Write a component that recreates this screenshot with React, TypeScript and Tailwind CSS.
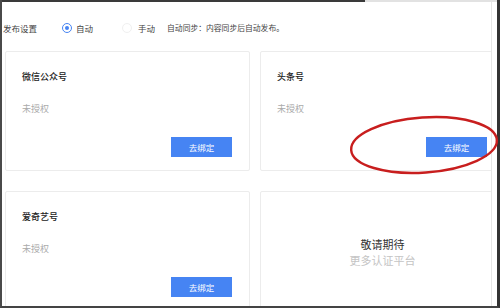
import React from "react";

const font = { fontFamily: '"Noto Sans CJK SC", "Noto Sans", sans-serif' };

function Card({ title }: { title: string }) {
  return (
    <div className="w-[245px] h-[120px] shrink-0 border border-[#ececec] rounded-[2px] bg-white flex flex-col pl-[16px] pr-[17px] pt-[17px] pb-[13px]">
      <div className="text-[9px] leading-[16px] text-[#222] font-medium">{title}</div>
      <div className="text-[9px] leading-[16px] text-[#aaa] mt-[16px]">未授权</div>
      <div className="flex-1" />
      <div className="flex justify-end">
        <div className="w-[61px] h-[20px] bg-[#4684f3] text-white text-[8.5px] flex items-center justify-center">去绑定</div>
      </div>
    </div>
  );
}

export default function App() {
  return (
    <div className="relative w-[500px] h-[308px] bg-white overflow-hidden" style={font}>
      <div className="w-full h-full flex flex-col border-l-2 border-l-[#4a4a4a] border-r-[3px] border-r-[#333] border-b-2 border-b-[#444]">
        <div className="flex h-[2px] shrink-0">
          <div className="w-[363px] bg-[#3a3a3a]" />
          <div className="flex-1 bg-[#e2e2e2]" />
        </div>
        <div className="flex flex-1 min-h-0">
          <div className="flex-1 min-w-0 overflow-hidden flex flex-col">
            <div className="h-[49px] shrink-0 flex items-center pt-[3px] text-[8.5px] text-[#444]">
              <span className="ml-[1px]">发布设置</span>
              <span className="ml-[25px] w-[10px] h-[10px] rounded-full border border-[#4684f3] flex items-center justify-center">
                <span className="w-[4px] h-[4px] rounded-full bg-[#4684f3]" />
              </span>
              <span className="ml-[4px]">自动</span>
              <span className="ml-[29px] w-[10px] h-[10px] rounded-full border border-[#f0f0f0]" />
              <span className="ml-[6px]">手动</span>
              <span className="ml-[12px] text-[7.8px]">自动同步：内容同步后自动发布。</span>
            </div>
            <div className="flex flex-col gap-[20px] pl-[3px]">
              <div className="flex gap-[10px]">
                <Card title="微信公众号" />
                <Card title="头条号" />
              </div>
              <div className="flex gap-[10px]">
                <Card title="爱奇艺号" />
                <div className="w-[245px] h-[120px] shrink-0 border border-[#ececec] rounded-[2px] bg-white flex flex-col items-center justify-center pt-[2px]">
                  <div className="text-[11px] leading-[16px] text-[#333]">敬请期待</div>
                  <div className="text-[11px] leading-[16px] text-[#c4c4c4]">更多认证平台</div>
                </div>
              </div>
            </div>
          </div>
          <div className="w-[6px] shrink-0 border-l border-[#e6e6e6]" />
        </div>
      </div>
      <svg className="absolute left-0 top-0 pointer-events-none" width="500" height="308" viewBox="0 0 500 308">
        <ellipse cx="424" cy="145" rx="73" ry="27.5" transform="rotate(-4 424 145)" fill="none" stroke="#c81e1e" strokeWidth="2.4" />
      </svg>
    </div>
  );
}
